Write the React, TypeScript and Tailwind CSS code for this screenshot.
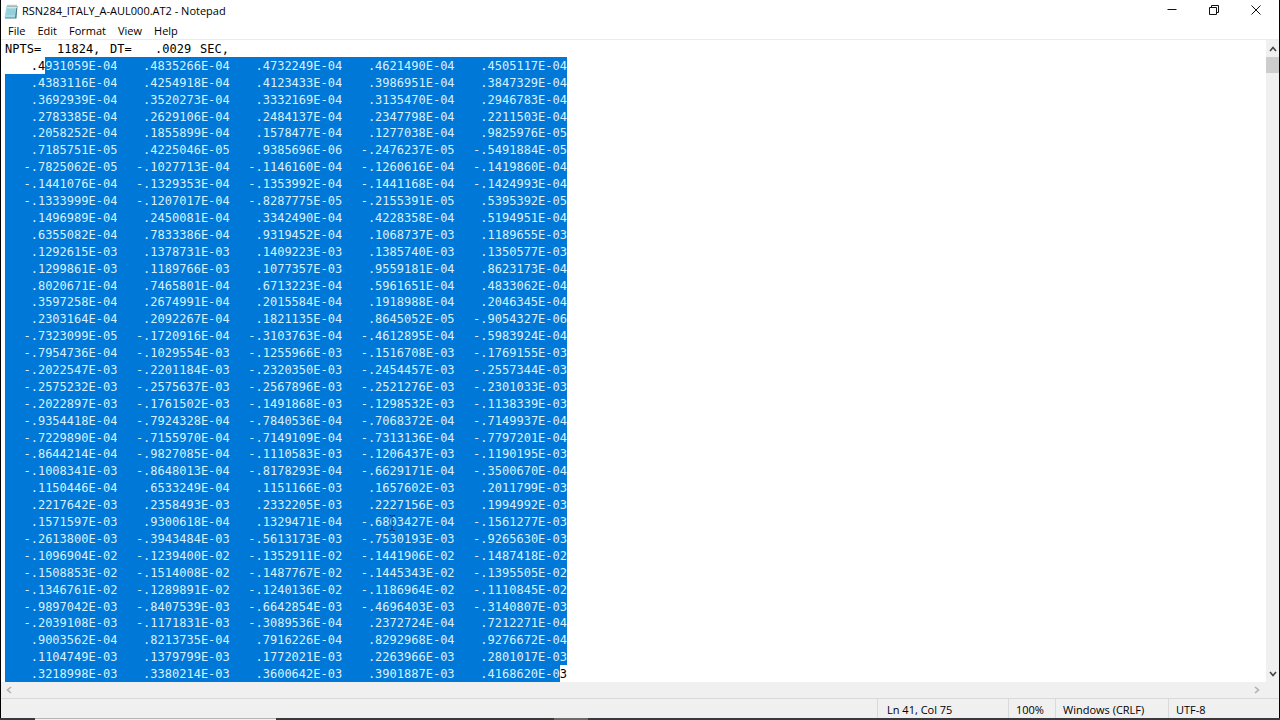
import type { ReactNode } from 'react'

const FIRST_ROW = ['.4835266E-04', '.4732249E-04', '.4621490E-04', '.4505117E-04']
const LAST_ROW = ['.3218998E-03', '.3380214E-03', '.3600642E-03', '.3901887E-03']

const ROWS = `
.4383116E-04 .4254918E-04 .4123433E-04 .3986951E-04 .3847329E-04
.3692939E-04 .3520273E-04 .3332169E-04 .3135470E-04 .2946783E-04
.2783385E-04 .2629106E-04 .2484137E-04 .2347798E-04 .2211503E-04
.2058252E-04 .1855899E-04 .1578477E-04 .1277038E-04 .9825976E-05
.7185751E-05 .4225046E-05 .9385696E-06 -.2476237E-05 -.5491884E-05
-.7825062E-05 -.1027713E-04 -.1146160E-04 -.1260616E-04 -.1419860E-04
-.1441076E-04 -.1329353E-04 -.1353992E-04 -.1441168E-04 -.1424993E-04
-.1333999E-04 -.1207017E-04 -.8287775E-05 -.2155391E-05 .5395392E-05
.1496989E-04 .2450081E-04 .3342490E-04 .4228358E-04 .5194951E-04
.6355082E-04 .7833386E-04 .9319452E-04 .1068737E-03 .1189655E-03
.1292615E-03 .1378731E-03 .1409223E-03 .1385740E-03 .1350577E-03
.1299861E-03 .1189766E-03 .1077357E-03 .9559181E-04 .8623173E-04
.8020671E-04 .7465801E-04 .6713223E-04 .5961651E-04 .4833062E-04
.3597258E-04 .2674991E-04 .2015584E-04 .1918988E-04 .2046345E-04
.2303164E-04 .2092267E-04 .1821135E-04 .8645052E-05 -.9054327E-06
-.7323099E-05 -.1720916E-04 -.3103763E-04 -.4612895E-04 -.5983924E-04
-.7954736E-04 -.1029554E-03 -.1255966E-03 -.1516708E-03 -.1769155E-03
-.2022547E-03 -.2201184E-03 -.2320350E-03 -.2454457E-03 -.2557344E-03
-.2575232E-03 -.2575637E-03 -.2567896E-03 -.2521276E-03 -.2301033E-03
-.2022897E-03 -.1761502E-03 -.1491868E-03 -.1298532E-03 -.1138339E-03
-.9354418E-04 -.7924328E-04 -.7840536E-04 -.7068372E-04 -.7149937E-04
-.7229890E-04 -.7155970E-04 -.7149109E-04 -.7313136E-04 -.7797201E-04
-.8644214E-04 -.9827085E-04 -.1110583E-03 -.1206437E-03 -.1190195E-03
-.1008341E-03 -.8648013E-04 -.8178293E-04 -.6629171E-04 -.3500670E-04
.1150446E-04 .6533249E-04 .1151166E-03 .1657602E-03 .2011799E-03
.2217642E-03 .2358493E-03 .2332205E-03 .2227156E-03 .1994992E-03
.1571597E-03 .9300618E-04 .1329471E-04 -.6803427E-04 -.1561277E-03
-.2613800E-03 -.3943484E-03 -.5613173E-03 -.7530193E-03 -.9265630E-03
-.1096904E-02 -.1239400E-02 -.1352911E-02 -.1441906E-02 -.1487418E-02
-.1508853E-02 -.1514008E-02 -.1487767E-02 -.1445343E-02 -.1395505E-02
-.1346761E-02 -.1289891E-02 -.1240136E-02 -.1186964E-02 -.1110845E-02
-.9897042E-03 -.8407539E-03 -.6642854E-03 -.4696403E-03 -.3140807E-03
-.2039108E-03 -.1171831E-03 -.3089536E-04 .2372724E-04 .7212271E-04
.9003562E-04 .8213735E-04 .7916226E-04 .8292968E-04 .9276672E-04
.1104749E-03 .1379799E-03 .1772021E-03 .2263966E-03 .2801017E-03
`
  .trim()
  .split('\n')
  .map((line) => line.split(' '))

const MENUS = ['File', 'Edit', 'Format', 'View', 'Help']

function Row({ children }: { children: ReactNode }) {
  return <div className="grid min-h-0 w-[562px] grid-cols-5 grid-rows-[minmax(0,1fr)] text-right text-[#d8f1ff]">{children}</div>
}

function Cell({ children }: { children: ReactNode }) {
  return <span className="bg-[#0078d7]">{children}</span>
}

function NotepadIcon() {
  return (
    <svg width="14" height="15" viewBox="0 0 14 15" aria-hidden="true">
      <path d="M3 2h10.5l-1 12.5H1z" fill="#4e8088" />
      <path d="M2.5 2h10l-1.5 11.500H.5z" fill="#a5dbe4" />
      <path d="M3 2h10l-.3 2H2.700z" fill="#d7e3e5" />
      <path d="M3 6h8.500M2.700 8h8.500M2.500 10h8.400" stroke="#78bccb" strokeWidth=".7" />
      <path d="M4 .8v2.200M6 .8v2.200M8 .8v2.200M10 .8v2.200M12 .8v2.200" stroke="#6b7477" strokeWidth=".8" />
    </svg>
  )
}

function Chevron({ d }: { d: string }) {
  return (
    <svg width="8" height="8" viewBox="0 0 8 8" fill="none" stroke="currentColor" strokeWidth="1.6" aria-hidden="true">
      <path d={d} />
    </svg>
  )
}

function TitleBar() {
  return (
    <header className="flex h-[22px] shrink-0 items-center pr-0.5 pl-[3px]">
      <NotepadIcon />
      <h1 className="ml-1 flex-1 text-[11px] leading-4">RSN284_ITALY_A-AUL000.AT2 - Notepad</h1>
      <div className="flex h-5 self-start">
        <button type="button" aria-label="Minimize" className="flex w-[42px] items-center justify-center">
          <svg width="10" height="10" viewBox="0 0 10 10" stroke="#111" aria-hidden="true">
            <path d="M.5 4.500h9" />
          </svg>
        </button>
        <button type="button" aria-label="Restore" className="flex w-[42px] items-center justify-center">
          <svg width="10" height="10" viewBox="0 0 10 10" fill="none" stroke="#111" aria-hidden="true">
            <path d="M.5 2.500h7v7h-7zM2.500 2.500v-2h7v7h-2" />
          </svg>
        </button>
        <button type="button" aria-label="Close" className="flex w-[42px] items-center justify-center">
          <svg width="10" height="10" viewBox="0 0 10 10" stroke="#111" aria-hidden="true">
            <path d="M.5.5l9 9M9.500.5l-9 9" />
          </svg>
        </button>
      </div>
    </header>
  )
}

function Editor() {
  return (
    <div
      role="textbox"
      aria-multiline="true"
      aria-label="Text editor"
      className="relative grid min-h-0 min-w-0 flex-1 auto-rows-fr overflow-hidden bg-white pl-1 font-['DejaVu_Sans_Mono',monospace] text-[12px] leading-[18px]"
    >
      <div className="grid min-h-0 grid-cols-[52px_53px_45px_45px_auto] justify-start">
        <span>NPTS=</span>
        <span>11824,</span>
        <span>DT=</span>
        <span>.0029</span>
        <span>SEC,</span>
      </div>
      <Row>
        <span className="flex justify-end">
          <span className="text-black">.4</span>
          <Cell>931059E-04</Cell>
        </span>
        {FIRST_ROW.map((v) => (
          <Cell key={v}>{v}</Cell>
        ))}
      </Row>
      {ROWS.map((row) => (
        <Row key={row[0]}>
          {row.map((v) => (
            <Cell key={v}>{v}</Cell>
          ))}
        </Row>
      ))}
      <Row>
        {LAST_ROW.map((v) => (
          <Cell key={v}>{v}</Cell>
        ))}
        <span className="flex">
          <span className="flex-1 bg-[#0078d7]">.4168620E-0</span>
          <span className="text-black">3</span>
        </span>
      </Row>
      {/* mouse I-beam */}
      <svg className="absolute top-[475px] left-[387px]" width="8" height="16" viewBox="0 0 8 16" fill="none" stroke="#0a2c5c" aria-hidden="true">
        <path d="M1 .5h2l1 1 1-1h2M4 1.500v13M1 15.500h2l1-1 1 1h2" />
      </svg>
    </div>
  )
}

function StatusBar() {
  return (
    <footer className="flex h-5 shrink-0 border-t border-[#d9d9d9] bg-[#f0f0f0] text-[11px] leading-[22px]">
      <span className="flex-1" />
      <span className="w-[131px] border-l border-[#d9d9d9] pl-[9px]">Ln 41, Col 75</span>
      <span className="w-[47px] border-l border-[#d9d9d9] pl-[7px]">100%</span>
      <span className="w-[113px] border-l border-[#d9d9d9] pl-[7px]">Windows (CRLF)</span>
      <span className="w-[111px] border-l border-[#d9d9d9] pl-[7px]">UTF-8</span>
    </footer>
  )
}

export default function App() {
  return (
    <div className="flex h-screen flex-col overflow-hidden bg-[#3a3a3e] font-['Open_Sans',sans-serif] text-black">
      <div className="flex min-h-0 flex-1 flex-col border-x border-black bg-white">
        <TitleBar />
        <nav className="flex h-[18px] shrink-0 gap-3 border-b border-[#ececec] pl-[7px] text-[11px] leading-4">
          {MENUS.map((m) => (
            <button key={m} type="button">
              {m}
            </button>
          ))}
        </nav>
        <div className="flex min-h-0 flex-1">
          <Editor />
          <div className="flex w-[13px] shrink-0 flex-col items-center bg-[#f0f0f0] text-[#444]">
            <button type="button" aria-label="Scroll up" className="flex h-[17px] items-center">
              <Chevron d="M1 6l3-3.500L7 6" />
            </button>
            <div className="h-4 w-full bg-[#cdcdcd]" />
            <div className="flex-1" />
            <button type="button" aria-label="Scroll down" className="flex h-[17px] items-center">
              <Chevron d="M1 2l3 3.500L7 2" />
            </button>
          </div>
        </div>
        <div className="flex h-4 shrink-0 items-center justify-between bg-[#f0f0f0] pr-[18px] pl-1 text-[#b0b0b0]">
          <button type="button" aria-label="Scroll left">
            <Chevron d="M6 1L2.500 4 6 7" />
          </button>
          <button type="button" aria-label="Scroll right">
            <Chevron d="M2 1l3.500 3L2 7" />
          </button>
        </div>
        <StatusBar />
      </div>
      {/* edge of the taskbar */}
      <div className="flex h-0.5 shrink-0 gap-[278px] pl-[35px]">
        <div className="w-[241px] border-t border-[#b5b5b5] bg-[#f0f0f0]" />
        <div className="w-[34px] bg-[#6b6b6b]" />
      </div>
    </div>
  )
}
